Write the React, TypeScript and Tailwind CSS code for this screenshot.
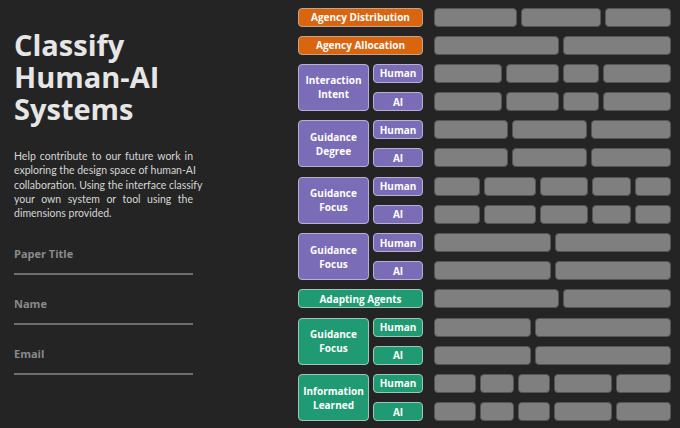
import React from 'react';

type Tone = 'orange' | 'purple' | 'green';

type Group =
  | { kind: 'single'; label: string; tone: Tone }
  | { kind: 'pair'; label: string[]; tone: Tone };

const toneClass: Record<Tone, string> = {
  orange: 'bg-[#d9650f] border-[#c4a58c]',
  purple: 'bg-[#7a6cb7] border-[#b7b0d4]',
  green: 'bg-[#1f9a73] border-[#9fc6b8]',
};

const groups: Group[] = [
  { kind: 'single', label: 'Agency Distribution', tone: 'orange' },
  { kind: 'single', label: 'Agency Allocation', tone: 'orange' },
  { kind: 'pair', label: ['Interaction', 'Intent'], tone: 'purple' },
  { kind: 'pair', label: ['Guidance', 'Degree'], tone: 'purple' },
  { kind: 'pair', label: ['Guidance', 'Focus'], tone: 'purple' },
  { kind: 'pair', label: ['Guidance', 'Focus'], tone: 'purple' },
  { kind: 'single', label: 'Adapting Agents', tone: 'green' },
  { kind: 'pair', label: ['Guidance', 'Focus'], tone: 'green' },
  { kind: 'pair', label: ['Information', 'Learned'], tone: 'green' },
];

// relative widths of the option slots in each row
const rows: number[][] = [
  [83, 80, 66],
  [125, 108],
  [69, 53, 35, 69],
  [69, 53, 35, 69],
  [74, 74, 80],
  [74, 74, 80],
  [46, 52, 49, 38, 36],
  [46, 52, 49, 38, 36],
  [116, 116],
  [116, 116],
  [125, 108],
  [96, 136],
  [96, 136],
  [42, 33, 32, 58, 56],
  [42, 33, 32, 58, 56],
];

const lines = [
  'Help contribute to our future work in',
  'exploring the design space of human-AI',
  'collaboration. Using the interface classify',
  'your own system or tool using the',
];

const Pill = ({ tone, className, children }: { tone: Tone; className?: string; children: React.ReactNode }) => (
  <div
    className={`${toneClass[tone]} ${className ?? ''} flex flex-col items-center justify-center rounded-[4px] border-[1.5px] text-center text-[10px] font-bold leading-[14px] text-white`}
  >
    {children}
  </div>
);

const Field = ({ label }: { label: string }) => (
  <div className="flex flex-col">
    <span className="text-[11px] font-bold leading-[15px] text-[#8a8a8a]">{label}</span>
    <div className="mt-[12px] h-[2px] w-[179px] bg-[#6e6e6e]" />
  </div>
);

export default function App() {
  return (
    <div className="flex h-[428px] w-[680px] overflow-hidden bg-[#242424] font-['Open_Sans',sans-serif]">
      {/* Intro and contact form */}
      <div className="flex w-[298px] shrink-0 flex-col pl-[14px] pt-[29px]">
        <h1 className="text-[29px] font-bold leading-[32px] text-[#e6e6e6]">
          <div>Classify</div>
          <div>Human-AI</div>
          <div>Systems</div>
        </h1>
        <div className="mt-[24px] w-[179px] font-['Lato',sans-serif] text-[10.5px] leading-[14.3px] text-[#d6d6d6]">
          {lines.map((l) => (
            <div key={l} className="whitespace-nowrap text-justify [text-align-last:justify]">
              {l}
            </div>
          ))}
          <div>dimensions provided.</div>
        </div>
        <div className="mt-[26px] flex flex-col gap-[21px]">
          <Field label="Paper Title" />
          <Field label="Name" />
          <Field label="Email" />
        </div>
      </div>

      {/* Dimension grid */}
      <div className="flex w-[373px] shrink-0 gap-[11px] pt-[7.5px]">
        <div className="grid w-[125px] grid-cols-[71px_50px] auto-rows-[19px] gap-x-[4px] gap-y-[9.2px]">
          {groups.map((g, i) =>
            g.kind === 'single' ? (
              <Pill key={i} tone={g.tone} className="col-span-2">
                {g.label}
              </Pill>
            ) : (
              <React.Fragment key={i}>
                <Pill tone={g.tone} className="row-span-2">
                  {g.label.map((t) => (
                    <span key={t}>{t}</span>
                  ))}
                </Pill>
                <Pill tone={g.tone}>Human</Pill>
                <Pill tone={g.tone}>AI</Pill>
              </React.Fragment>
            )
          )}
        </div>
        <div className="flex flex-1 flex-col gap-y-[9.2px]">
          {rows.map((r, i) => (
            <div key={i} className="flex h-[19px] gap-[4px]">
              {r.map((w, j) => (
                <div
                  key={j}
                  style={{ flexGrow: w }}
                  className="basis-0 rounded-[4px] border-[1.5px] border-[#555555] bg-[#7f7f7f]"
                />
              ))}
            </div>
          ))}
        </div>
      </div>
    </div>
  );
}
